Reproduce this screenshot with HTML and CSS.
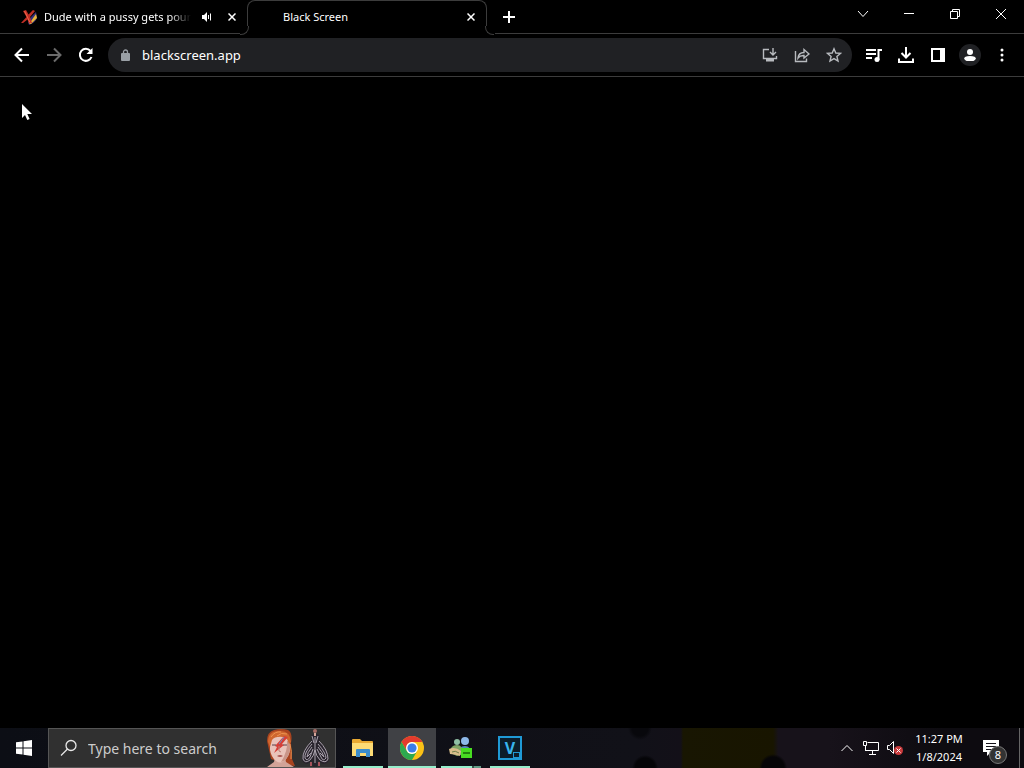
FILE: index.html
```html
<!DOCTYPE html>
<html lang="en">
<head>
  <meta charset="UTF-8">
  <title>Black Screen</title>
  <link rel="stylesheet" href="styles.css">
</head>
<body>

<header class="browser">
  <div class="tab-strip">
    <div class="tab">
      <svg class="favicon" width="16" height="16" viewBox="0 0 16 16">
        <path d="M9 9 L15 3 L16 9 Q14 14 8 16 L7 13 Z" fill="#34307c"/>
        <path d="M8 15 L15 5 L16 9 L10 15 Z" fill="#e8b53a"/>
        <path d="M2 2 L5 1 L7.500 5.500 L12 1 L14 2 L9 8 L11 14 L8 14.500 L6.500 10.500 L2 14 L0 14 L5.500 8 Z" fill="#c02f26"/>
        <path d="M3.500 2 L9 13.500" stroke="#f0664a" stroke-width="1"/>
      </svg>
      <span class="tab-title">Dude with a pussy gets poun</span>
      <button class="tab-btn" aria-label="Mute tab">
        <svg width="12" height="12" viewBox="0 0 12 12" fill="#fff">
          <path d="M1 4 H3 L6 1 V11 L3 8 H1 Z"/>
          <path d="M7.500 4 V8 M9.500 2.500 V9.500" stroke="#fff" stroke-width="1"/>
        </svg>
      </button>
      <button class="tab-btn tab-close" aria-label="Close tab">
        <svg width="8" height="8" viewBox="0 0 8 8"><path d="M.5 .5 L7.500 7.500 M7.500 .5 L.5 7.500" stroke="#fff" stroke-width="1.500"/></svg>
      </button>
    </div>
    <div class="tab tab-active">
      <span class="tab-title">Black Screen</span>
      <button class="tab-btn tab-close" aria-label="Close tab">
        <svg width="8" height="8" viewBox="0 0 8 8"><path d="M.5 .5 L7.500 7.500 M7.500 .5 L.5 7.500" stroke="#fff" stroke-width="1.500"/></svg>
      </button>
    </div>
    <div class="strip-rest">
      <button class="new-tab" aria-label="New tab">
        <svg width="12" height="12" viewBox="0 0 12 12"><path d="M6 0 V12 M0 6 H12" stroke="#fff" stroke-width="2"/></svg>
      </button>
      <div class="window-controls">
        <button aria-label="Search tabs"><svg width="12" height="12" viewBox="0 0 12 12"><path d="M1 3 L6 8.500 L11 3"/></svg></button>
        <button aria-label="Minimize"><svg width="12" height="12" viewBox="0 0 12 12"><path d="M1 5.500 H11"/></svg></button>
        <button aria-label="Restore"><svg width="12" height="12" viewBox="0 0 12 12"><path d="M1.500 3.500 H8.500 V10.500 H1.500 Z M3.500 3.500 V1.500 H10.500 V8.500 H8.500"/></svg></button>
        <button aria-label="Close"><svg width="12" height="12" viewBox="0 0 12 12"><path d="M1 1 L11 11 M11 1 L1 11"/></svg></button>
      </div>
    </div>
  </div>

  <div class="toolbar">
    <nav class="nav-buttons">
      <button aria-label="Back"><svg width="16" height="16" viewBox="0 0 16 16"><path d="M15 8 H2 M8 1.500 L1.500 8 L8 14.500"/></svg></button>
      <button class="dim" aria-label="Forward"><svg width="16" height="16" viewBox="0 0 16 16"><path d="M1 8 H14 M8 1.500 L14.500 8 L8 14.500"/></svg></button>
      <button aria-label="Reload"><svg width="16" height="16" viewBox="0 0 16 16"><path d="M13.500 10 A6 6 0 1 1 12.500 4"/><path d="M14.500 1 V7 H8.500 Z" fill="#fff" stroke="none"/></svg></button>
    </nav>
    <div class="address">
      <svg class="lock" width="10" height="12" viewBox="0 0 10 12">
        <rect x="0" y="4" width="9" height="8" rx="1" fill="#9aa0a6"/>
        <path d="M2.500 5 V3 A2 2 0 0 1 6.500 3 V5" fill="none" stroke="#9aa0a6" stroke-width="1.300"/>
      </svg>
      <input type="text" class="url" value="blackscreen.app" aria-label="Address">
      <button aria-label="Install app"><svg width="16" height="16" viewBox="0 0 16 16"><path d="M7 2.500 H1.500 V11.500 H14.500 V9"/><path d="M11 1 V7.500 M8 5 L11 8 L14 5"/><path d="M4 12 H12 V14.500 H4 Z" fill="#b8bbbf" stroke="none"/></svg></button>
      <button aria-label="Share"><svg width="16" height="16" viewBox="0 0 16 16"><path d="M1.500 4 V14.500 H12.500 V11.500"/><path d="M4 11 Q4.500 5.500 10 5.500 V2.500 L15 7 L10 11 V8.500 Q6 8.300 4 11 Z"/></svg></button>
      <button aria-label="Bookmark"><svg width="16" height="16" viewBox="0 0 16 16"><path d="M8 1.800 L9.800 6 L14.400 6.400 L10.900 9.500 L12 14 L8 11.600 L4 14 L5.100 9.500 L1.600 6.400 L6.200 6 Z"/></svg></button>
    </div>
    <div class="actions">
      <button aria-label="Media controls"><svg width="18" height="16" viewBox="0 0 18 16"><path d="M1 3 H11 M1 7 H11 M1 11 H7 M13.500 13 V3 H17"/><circle cx="12" cy="12.500" r="2.500" fill="#fff" stroke="none"/></svg></button>
      <button aria-label="Downloads"><svg width="18" height="18" viewBox="0 0 18 18"><path d="M9 1 V11.500 M4.500 7 L9 11.500 L13.500 7 M2 12.500 V16 H16 V12.500"/></svg></button>
      <button aria-label="Side panel"><svg width="16" height="16" viewBox="0 0 16 16"><path d="M2 2 H14 V14 H2 Z M11 2 V14"/><path d="M11 2 H14 V14 H11 Z" fill="#fff"/></svg></button>
      <button class="profile" aria-label="Profile"><svg width="14" height="14" viewBox="0 0 14 14" fill="#fff"><circle cx="7" cy="4" r="3"/><path d="M1 13 V11 Q1 8 7 8 T13 11 V13 Z"/></svg></button>
      <button aria-label="Menu"><svg width="4" height="14" viewBox="0 0 4 14" fill="#fff"><circle cx="2" cy="2" r="1.500"/><circle cx="2" cy="7" r="1.500"/><circle cx="2" cy="12" r="1.500"/></svg></button>
    </div>
  </div>
</header>

<main class="page">
  <svg class="cursor" width="12" height="18" viewBox="0 0 12 18">
    <path d="M1 1 V15 L4 12 L6.300 17 L8.600 16 L6.300 11 H11 Z" fill="#fff"/>
  </svg>
</main>

<footer class="taskbar">
  <button class="start" aria-label="Start">
    <svg width="16" height="16" viewBox="0 0 16 16" fill="#fff"><path d="M0 2.300 L6.500 1.400 V7.500 H0 Z M7.500 1.200 L16 0 V7.500 H7.500 Z M0 8.500 H6.500 V14.600 L0 13.700 Z M7.500 8.500 H16 V16 L7.500 14.800 Z"/></svg>
  </button>
  <label class="search">
    <svg width="18" height="18" viewBox="0 0 18 18" fill="none" stroke="#e8e8e8" stroke-width="1.300"><circle cx="11" cy="6.500" r="5"/><path d="M7.500 10 L1 16.500"/></svg>
    <input type="text" placeholder="Type here to search" aria-label="Type here to search">
    <svg class="highlight" width="68" height="38" viewBox="0 0 68 38">
      <!-- portrait -->
      <path d="M0 12 Q0 3 7 1 Q14 -1 21 1 Q26 4 24 14 L25 30 L28 37 L20 36 L4 30 Z" fill="#a8431f"/>
      <path d="M8 28 H18 L19 33 L27 38 H0 L7 33 Z" fill="#d2a398"/>
      <path d="M3 10 Q13 4 23 10 L23 21 Q22 28 17 32 Q13 35 9 32 Q4 28 3 21 Z" fill="#e9c3ba"/>
      <path d="M17 32 Q22 28 23 20 L23 11 L20 12 Q21 22 14 33 Z" fill="#c99588"/>
      <path d="M1 13 Q1 2 12 2 Q23 1 24 13 L22 15 Q21 9 16 8 Q8 7 5 11 L3 18 Z" fill="#cf672f"/>
      <path d="M4 8 Q8 2 14 3 M10 7 Q14 3 20 5 M23 15 Q25 22 24 30" stroke="#ee9350" fill="none"/>
      <path d="M17 7 L21 8 L15 15 L17 16 L7 24 L10 18 L8 17 Z" fill="#d63f38"/>
      <path d="M17 8 L12 15" stroke="#7589bd"/>
      <path d="M5 16 H9 M16 16 H20" stroke="#5a434b"/>
      <path d="M12 17 V22 L14 23" stroke="#bb8176" fill="none"/>
      <path d="M10 27 Q13 25 16 27 Q13 29 10 27 Z" fill="#a8544e"/>
      <!-- striped suit -->
      <path d="M45 6 L47 5 H50 L52 6 L53 13 Q62 21 62 31 Q61 35 56 35 L51 32 L50 38 H46 L45 32 L40 35 Q35 34 35 30 Q36 20 44 13 Z" fill="#29242d"/>
      <circle cx="48" cy="2" r="2" fill="#a86b64"/>
      <path d="M47 4 H49 V7 H47 Z" fill="#d4a69a"/>
      <g fill="none" stroke="#aaa2ad">
        <path d="M45 7 L47 14 M51 7 L49 14 M48 8 V34"/>
        <path d="M45 12 Q35 22 36 30 Q38 35 43 31 Q47 27 48 21 Q49 27 53 31 Q59 35 61 30 Q61 21 52 12"/>
        <path d="M45 15 Q37 24 38 29 Q40 33 43 28 L46 20 M51 15 Q59 24 59 29 Q56 33 54 28 L50 20"/>
        <path d="M45 18 Q40 24 40 28 L44 24 M51 18 Q56 24 57 28 L53 24"/>
      </g>
      <path d="M44 33 V37 M52 33 V37" stroke="#a8525c" stroke-width="2"/>
    </svg>
  </label>

  <div class="apps">
    <button class="app" aria-label="File Explorer">
      <svg width="22" height="20" viewBox="0 0 22 20">
        <path d="M0 2 Q0 1 1 1 H8 L10 3 H20 Q21 3 21 4 V18 H0 Z" fill="#e9a932"/>
        <path d="M0 5 H21 V18 H0 Z" fill="#fddb75"/>
        <path d="M4 19 V12 Q4 11 5 11 H17 Q18 11 18 12 V19 H14 V15 H8 V19 Z" fill="#3c8dcc"/>
      </svg>
    </button>
    <button class="app app-active" aria-label="Google Chrome">
      <svg width="24" height="24" viewBox="0 0 24 24">
        <circle cx="12" cy="12" r="12" fill="#fbc116"/>
        <path d="M1.600 6 A12 12 0 0 1 22.400 6 L12 6 A6 6 0 0 0 6.800 9 L6.800 15 Z" fill="#e33b2e"/>
        <path d="M1.600 6 L6.800 15 A6 6 0 0 0 17.200 15 L12 24 A12 12 0 0 1 1.600 6 Z" fill="#2da94f"/>
        <circle cx="12" cy="12" r="6" fill="#fff"/>
        <circle cx="12" cy="12" r="4.600" fill="#3b7de9"/>
      </svg>
    </button>
    <button class="app app-stacked" aria-label="Messenger">
      <svg width="24" height="24" viewBox="0 0 24 24">
        <circle cx="8" cy="6" r="3" fill="#8fc0a4"/>
        <circle cx="16" cy="5" r="4" fill="#8db8e8"/>
        <path d="M10 19 Q9 10 16 10 Q22 10 22 18 Z" fill="#5688be"/>
        <path d="M1 17 Q1 9 8 9 Q14 9 14 18 L8 20 Z" fill="#7fa566"/>
        <path d="M0 13 Q6 10 12 15 L11 20 Q5 18 1 18 Z" fill="#d8bd8a"/>
        <path d="M3 16 Q6 14 10 17" stroke="#6f7f4a" fill="none"/>
        <path d="M12 12 H23 V22 H12 Z" fill="#47dd21"/>
        <path d="M14 17 H21" stroke="#23840f" stroke-width="2"/>
      </svg>
    </button>
    <button class="app" aria-label="VEGAS Pro">
      <span class="vegas">V<i></i></span>
    </button>
  </div>

  <div class="tray">
    <button aria-label="Show hidden icons"><svg width="14" height="8" viewBox="0 0 14 8"><path d="M1.500 7 L7 1.500 L12.500 7"/></svg></button>
    <button aria-label="Network"><svg width="18" height="16" viewBox="0 0 18 16"><path d="M5.500 2.500 H16.500 V10.500 H3.500 M1.500 1.500 H4.500 V5.500 H1.500 Z M3.500 5.500 V11 M10.500 10.500 V14 M7 14.500 H14"/></svg></button>
    <button aria-label="Volume muted"><svg width="18" height="16" viewBox="0 0 18 16"><path d="M1.500 5.500 H3.500 L7.500 1.500 V13.500 L3.500 9.500 H1.500 Z"/><circle cx="12.500" cy="10.500" r="4.500" fill="#c93a3c" stroke="none"/><path d="M10.500 8.500 L14.500 12.500 M14.500 8.500 L10.500 12.500"/></svg></button>
  </div>
  <div class="clock">
    <time datetime="23:27">11:27 PM</time>
    <time datetime="2024-01-08">1/8/2024</time>
  </div>
  <button class="notifications" aria-label="Notifications">
    <svg width="16" height="16" viewBox="0 0 16 16"><path d="M0 0 H16 V12 H8 L4 16 V12 H0 Z" fill="#fff"/><path d="M3 3.500 H13 M3 6.500 H13 M3 9.500 H9" stroke="#15131a"/></svg>
    <span class="badge">8</span>
  </button>
  <button class="show-desktop" aria-label="Show desktop"></button>
</footer>

</body>
</html>
```

FILE: styles.css
```css
* {
  box-sizing: border-box;
}

body {
  margin: 0;
  min-height: 100vh;
  display: flex;
  flex-direction: column;
  background: #000;
  color: #fff;
  font-family: "Noto Sans", "Open Sans", sans-serif;
  font-size: 12px;
}

button {
  display: flex;
  align-items: center;
  justify-content: center;
  padding: 0;
  border: none;
  background: none;
  color: inherit;
  font: inherit;
}

input {
  min-width: 0;
  padding: 0;
  border: none;
  outline: none;
  background: none;
  color: inherit;
  font: inherit;
}

svg {
  flex: none;
}

/* Tabs */
.tab-strip {
  display: flex;
  height: 34px;
}

.tab {
  display: flex;
  align-items: center;
  width: 240px;
  padding-left: 21px;
  border-bottom: 1px solid #3c3c3c;
  font-size: 11px;
}

.tab-title {
  flex: 1;
  overflow: hidden;
  white-space: nowrap;
}

.tab .favicon + .tab-title {
  margin: 0 8px 0 7px;
  -webkit-mask-image: linear-gradient(to right, #000 85%, transparent);
  mask-image: linear-gradient(to right, #000 85%, transparent);
}

.tab-btn {
  width: 16px;
  height: 16px;
}

.tab-close {
  margin-left: 9px;
}

.tab-active {
  position: relative;
  height: 26px;
  margin: 0 8px 0 7px;
  padding: 6px 7px 0 35px;
  border: 1px solid #3c3c3c;
  border-bottom: none;
  border-radius: 8px 8px 0 0;
}

/* curved feet of the active tab */
.tab-active::before,
.tab-active::after {
  content: "";
  position: absolute;
  top: 25px;
  width: 8px;
  height: 8px;
  border-bottom: 1px solid #3c3c3c;
}

.tab-active::before {
  left: -8px;
  border-right: 1px solid #3c3c3c;
  border-bottom-right-radius: 8px;
}

.tab-active::after {
  right: -8px;
  border-left: 1px solid #3c3c3c;
  border-bottom-left-radius: 8px;
}

.strip-rest {
  flex: 1;
  display: flex;
  justify-content: space-between;
  border-bottom: 1px solid #3c3c3c;
}

.new-tab {
  width: 28px;
}

.window-controls {
  display: flex;
  height: 28px;
}

.window-controls button {
  width: 46px;
}

.window-controls svg,
.tray svg {
  fill: none;
  stroke: #fff;
  stroke-width: 1;
}

/* Toolbar */
.toolbar {
  display: flex;
  align-items: center;
  height: 43px;
  padding: 0 6px;
  border-bottom: 1px solid #3c3c3c;
}

.nav-buttons,
.actions {
  display: flex;
}

.nav-buttons button,
.address button,
.actions button {
  width: 32px;
  height: 32px;
}

.nav-buttons svg,
.actions svg {
  fill: none;
  stroke: #fff;
  stroke-width: 2;
}

.nav-buttons .dim svg {
  stroke: #6b6b6b;
}

.address {
  flex: 1;
  display: flex;
  align-items: center;
  height: 34px;
  margin: 0 6px;
  padding: 0 2px 0 13px;
  border-radius: 17px;
  background: #202124;
}

.address button svg {
  fill: none;
  stroke: #b8bbbf;
  stroke-width: 1.4;
}

.url {
  flex: 1;
  margin-left: 11px;
  font-size: 13px;
}

.actions .profile svg {
  box-sizing: content-box;
  padding: 4px;
  border-radius: 50%;
  background: #202124;
  fill: #fff;
  stroke: none;
}

.actions button:last-child svg {
  fill: #fff;
  stroke: none;
}

/* Page */
.page {
  flex: 1;
  position: relative;
}

.cursor {
  position: absolute;
  left: 21px;
  top: 26px;
}

/* Taskbar */
.taskbar {
  display: flex;
  height: 40px;
  background:
    radial-gradient(circle at 63% 100%, #050508 10px, transparent 13px),
    radial-gradient(circle at 62.5% 0, #08080c 8px, transparent 12px),
    radial-gradient(circle at 75.5% 100%, #060507 11px, transparent 14px),
    linear-gradient(to right, #0c0e15 0, #111118 62%, #131018 66.5%, #181602 66.7%, #181500 75.5%, #17121a 76%, #17121a 81%, #0d0b10 92%, #0d0b10);
}

.start {
  width: 48px;
}

.search {
  display: flex;
  align-items: center;
  width: 288px;
  padding: 0 0 0 11px;
  border: 1px solid #555;
  background: #303030;
}

.search input {
  flex: 1;
  margin-left: 10px;
  font-size: 14px;
}

.search input::placeholder {
  color: #ccc;
  opacity: 1;
}

.apps {
  flex: 1;
  display: flex;
  gap: 1px;
  padding-left: 3px;
}

.app {
  position: relative;
  width: 48px;
}

.app::after {
  content: "";
  position: absolute;
  left: 4px;
  right: 4px;
  bottom: 0;
  height: 2px;
  background: #96eecb;
}

.app-active {
  background: #404145;
}

.app-active::after {
  left: 0;
  right: 0;
}

.app-stacked::after {
  background: linear-gradient(to right, #96eecb 31px, #36554c 31px, #36554c 33px, #629c86 33px);
}

.vegas {
  position: relative;
  width: 24px;
  height: 24px;
  border: 2px solid #1f9ad6;
  background: #0c1d2a;
  color: #38b5ee;
  font-size: 16px;
  font-weight: bold;
  line-height: 20px;
}

.vegas i {
  position: absolute;
  right: 0;
  bottom: 0;
  width: 7px;
  height: 6px;
  border: 1px solid #1f9ad6;
  background: #0c1d2a;
}

.tray {
  display: flex;
}

.tray button {
  width: 24px;
}

.clock {
  display: flex;
  flex-direction: column;
  justify-content: center;
  width: 64px;
  font-size: 11px;
  line-height: 18px;
  text-align: center;
}

.notifications {
  position: relative;
  width: 48px;
  padding-right: 8px;
}

.badge {
  position: absolute;
  left: 18px;
  top: 18px;
  width: 18px;
  height: 18px;
  border: 1px solid #777;
  border-radius: 50%;
  background: #333;
  font-size: 11px;
  line-height: 16px;
}

.show-desktop {
  width: 5px;
  border-left: 1px solid #666;
}
```
